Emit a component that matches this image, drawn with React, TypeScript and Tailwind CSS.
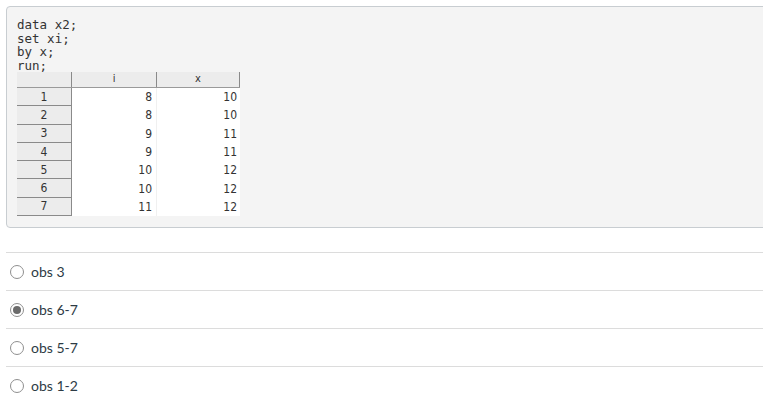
import React from "react";

const rows: [number, number, number][] = [
  [1, 8, 10],
  [2, 8, 10],
  [3, 9, 11],
  [4, 9, 11],
  [5, 10, 12],
  [6, 10, 12],
  [7, 11, 12],
];

const options = [
  { label: "obs 3", checked: false },
  { label: "obs 6-7", checked: true },
  { label: "obs 5-7", checked: false },
  { label: "obs 1-2", checked: false },
];

function Radio({ checked }: { checked: boolean }) {
  return (
    <span className="w-[14px] h-[14px] rounded-full border border-[#8f8f8f] bg-white flex items-center justify-center shrink-0">
      {checked && <span className="w-[8px] h-[8px] rounded-full bg-[#6b6b6b]" />}
    </span>
  );
}

export default function App() {
  return (
    <div className="w-[763px] h-[404px] bg-white overflow-hidden pt-[6px] pl-[6px]">
      <div className="w-[770px] h-[222px] bg-[#f4f4f4] border border-[#c8cdd1] rounded-[4px] pl-[10px] pt-[11px]">
        <pre
          className="text-[12.5px] leading-[13.5px] text-[#333]"
          style={{ fontFamily: '"DejaVu Sans Mono", monospace' }}
        >
          {"data x2;\nset xi;\nby x;\nrun;"}
        </pre>
        <div
          className="w-[223px] text-[12px] text-[#333]"
          style={{ fontFamily: '"DejaVu Sans Condensed", "DejaVu Sans", sans-serif' }}
        >
          <div className="flex h-[16px] bg-[#ececec] border-b border-[#9a9a9a] text-[11px]">
            <div className="w-[55px] border-r border-[#8a8a8a]" />
            <div className="w-[85px] border-r border-[#8a8a8a] flex items-center justify-center">i</div>
            <div className="w-[83px] border-r border-[#8a8a8a] flex items-center justify-center">x</div>
          </div>
          {rows.map(([n, i, x]) => (
            <div key={n} className="flex h-[18.3px]">
              <div className="w-[55px] bg-[#ececec] border-r border-b border-[#8a8a8a] flex items-center justify-center">
                {n}
              </div>
              <div className="w-[85px] bg-white border-r border-[#f0f0f0] flex items-center justify-end pr-[4px]">
                {i}
              </div>
              <div className="w-[83px] bg-white flex items-center justify-end pr-[3px]">{x}</div>
            </div>
          ))}
        </div>
      </div>
      <div
        className="mt-[24px] text-[14px] text-[#2d3b45]"
        style={{ fontFamily: "Lato, sans-serif" }}
      >
        {options.map((o) => (
          <div key={o.label} className="border-t border-[#dcdcdc] h-[38px] flex items-center gap-[7px] pl-[4px]">
            <Radio checked={o.checked} />
            <span>{o.label}</span>
          </div>
        ))}
      </div>
    </div>
  );
}
